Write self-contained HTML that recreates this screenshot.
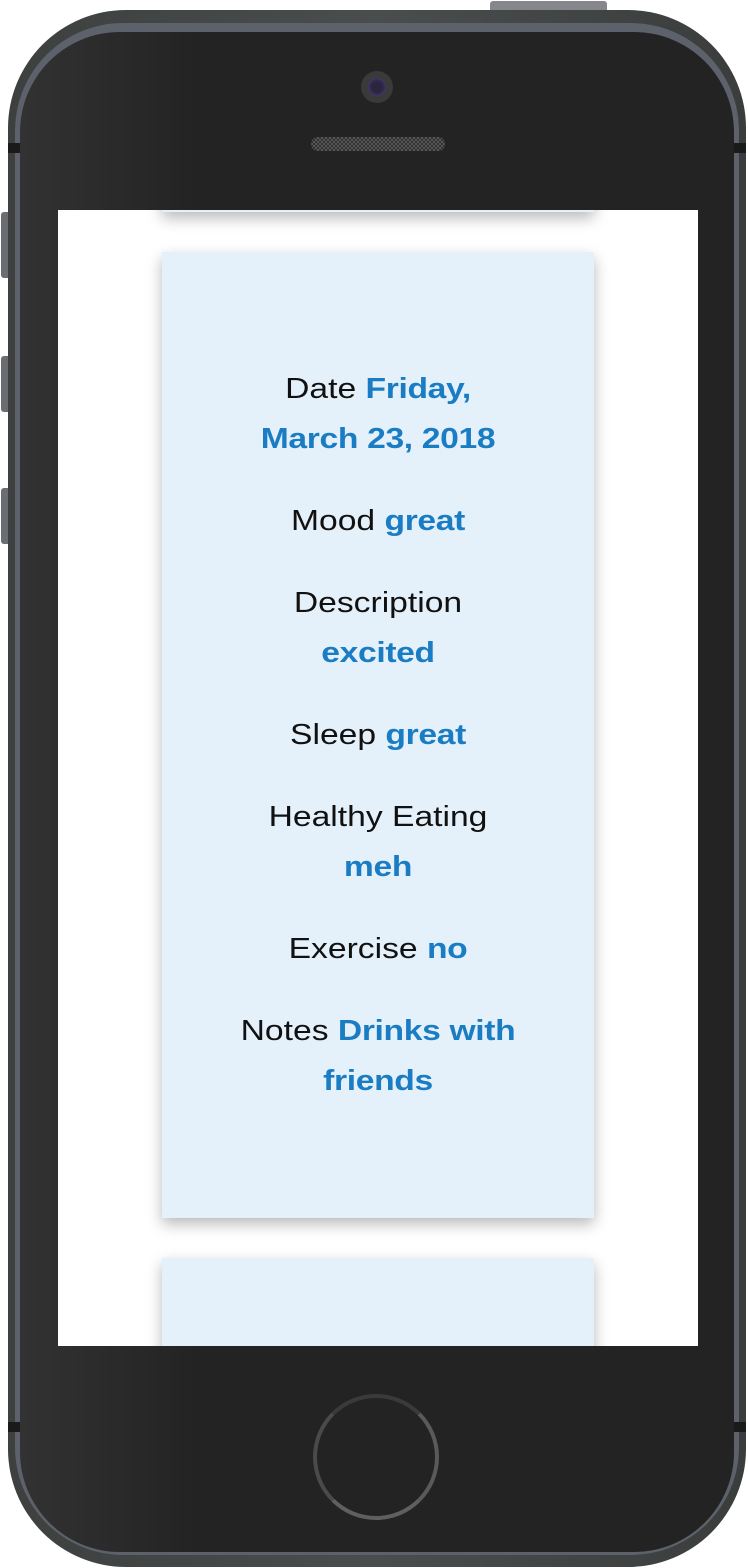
<!DOCTYPE html>
<html><head><style>
html,body{margin:0;padding:0;width:748px;height:1568px;background:#fff;overflow:hidden;position:relative;font-family:"Liberation Sans",sans-serif}
.abs{position:absolute}
.body{left:8px;top:10px;width:738px;height:1557px;border-radius:118px;background:linear-gradient(90deg,#3d403f,#4a4d4e 50%,#3a3d3c);}
.rim{left:15px;top:23px;width:724px;height:1532px;border-radius:108px;background:#5c616b}
.face{left:20px;top:32px;width:714px;height:1520px;border-radius:100px;background:linear-gradient(90deg,#323232 0,#232323 25%,#232323)}
.screen{left:58px;top:210px;width:640px;height:1136px;background:#fff;overflow:hidden}
.card{position:absolute;left:104px;width:432px;background:#e5f1fa;box-shadow:0 6px 14px rgba(0,0,0,.28)}
.line{position:absolute;left:0;width:640px;text-align:center;font-size:29px;line-height:34px;color:#111;white-space:nowrap;transform:scaleX(1.16);transform-origin:320px 0}
.b{color:#1a7dc4;font-weight:bold;letter-spacing:-0.3px}
</style></head><body>
<div class="abs" style="left:490px;top:1px;width:117px;height:14px;background:#86878c;border-radius:3px"></div>
<div class="abs" style="left:1px;top:212px;width:10px;height:66px;background:#6a6d72;border-radius:3px"></div>
<div class="abs" style="left:1px;top:356px;width:10px;height:56px;background:#6a6d72;border-radius:3px"></div>
<div class="abs" style="left:1px;top:488px;width:10px;height:56px;background:#6a6d72;border-radius:3px"></div>
<div class="abs body"></div>
<div class="abs rim"></div>
<div class="abs face"></div>
<div class="abs" style="left:8px;top:143px;width:12px;height:10px;background:#1a1a1a"></div>
<div class="abs" style="left:734px;top:143px;width:12px;height:10px;background:#1a1a1a"></div>
<div class="abs" style="left:8px;top:1422px;width:12px;height:10px;background:#1a1a1a"></div>
<div class="abs" style="left:734px;top:1422px;width:12px;height:10px;background:#1a1a1a"></div>
<div class="abs" style="left:361px;top:71px;width:32px;height:32px;border-radius:50%;background:#3a3a3a"></div>
<div class="abs" style="left:368px;top:78px;width:18px;height:18px;border-radius:50%;background:#2b2540;box-shadow:inset 0 0 4px #5a4a8a"></div>
<div class="abs" style="left:311px;top:137px;width:134px;height:14px;border-radius:7px;background:repeating-conic-gradient(#555 0 25%,#333 0 50%) 0 0/4px 4px"></div>
<div class="abs" style="left:313px;top:1394px;width:118px;height:118px;border-radius:50%;border:4px solid #4a4a4a;border-top-color:#3a3a3a;border-right-color:#5a5a5a;border-bottom-color:#5f5f5f;box-sizing:content-box"></div>
<div class="abs screen">
  <div class="card" style="top:-60px;height:62px"></div>
  <div class="card" style="top:42px;height:966px"></div>
  <div class="card" style="top:1048px;height:200px"></div>
  <div class="line" style="top:162px">Date <span class="b">Friday,</span></div>
  <div class="line" style="top:212px"><span class="b">March 23, 2018</span></div>
  <div class="line" style="top:294px">Mood <span class="b">great</span></div>
  <div class="line" style="top:376px">Description</div>
  <div class="line" style="top:426px"><span class="b">excited</span></div>
  <div class="line" style="top:508px">Sleep <span class="b">great</span></div>
  <div class="line" style="top:590px">Healthy Eating</div>
  <div class="line" style="top:640px"><span class="b">meh</span></div>
  <div class="line" style="top:722px">Exercise <span class="b">no</span></div>
  <div class="line" style="top:804px">Notes <span class="b">Drinks with</span></div>
  <div class="line" style="top:854px"><span class="b">friends</span></div>
</div>
</body></html>
